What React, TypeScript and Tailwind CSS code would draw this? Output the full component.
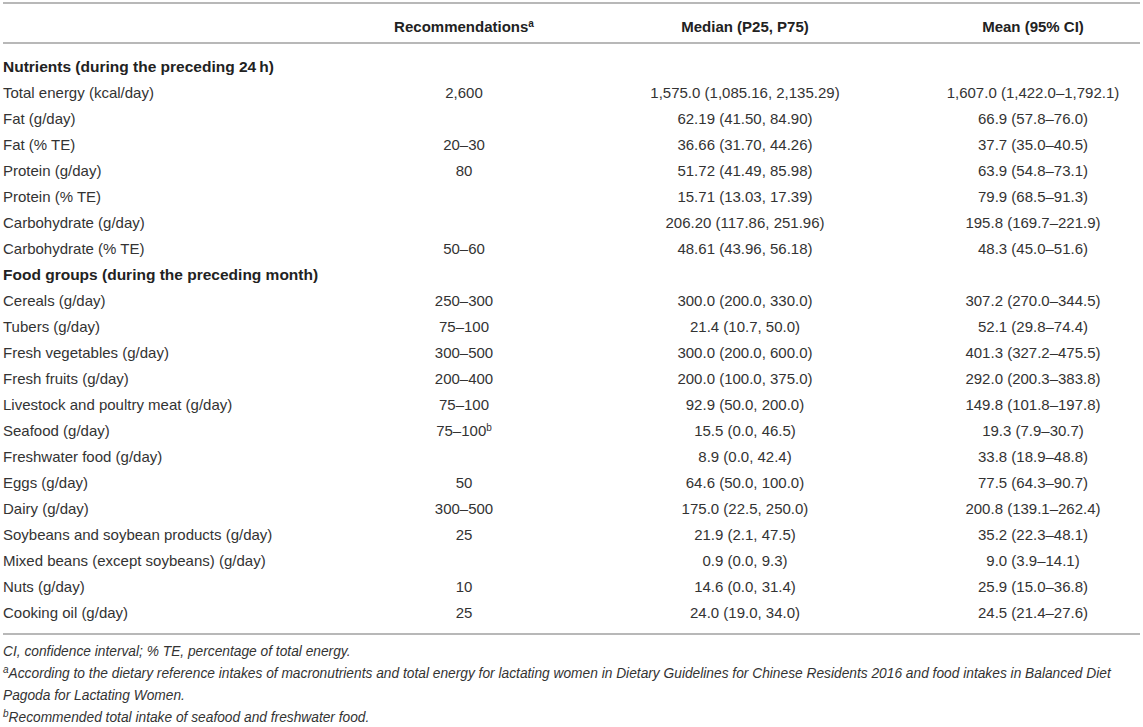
import React from 'react'

type Row = { label: string; rec?: string; sup?: string; median?: string; mean?: string; section?: boolean }

const rows: Row[] = [
  { label: 'Nutrients (during the preceding 24\u2009h)', section: true },
  { label: 'Total energy (kcal/day)', rec: '2,600', median: '1,575.0 (1,085.16, 2,135.29)', mean: '1,607.0 (1,422.0–1,792.1)' },
  { label: 'Fat (g/day)', median: '62.19 (41.50, 84.90)', mean: '66.9 (57.8–76.0)' },
  { label: 'Fat (% TE)', rec: '20–30', median: '36.66 (31.70, 44.26)', mean: '37.7 (35.0–40.5)' },
  { label: 'Protein (g/day)', rec: '80', median: '51.72 (41.49, 85.98)', mean: '63.9 (54.8–73.1)' },
  { label: 'Protein (% TE)', median: '15.71 (13.03, 17.39)', mean: '79.9 (68.5–91.3)' },
  { label: 'Carbohydrate (g/day)', median: '206.20 (117.86, 251.96)', mean: '195.8 (169.7–221.9)' },
  { label: 'Carbohydrate (% TE)', rec: '50–60', median: '48.61 (43.96, 56.18)', mean: '48.3 (45.0–51.6)' },
  { label: 'Food groups (during the preceding month)', section: true },
  { label: 'Cereals (g/day)', rec: '250–300', median: '300.0 (200.0, 330.0)', mean: '307.2 (270.0–344.5)' },
  { label: 'Tubers (g/day)', rec: '75–100', median: '21.4 (10.7, 50.0)', mean: '52.1 (29.8–74.4)' },
  { label: 'Fresh vegetables (g/day)', rec: '300–500', median: '300.0 (200.0, 600.0)', mean: '401.3 (327.2–475.5)' },
  { label: 'Fresh fruits (g/day)', rec: '200–400', median: '200.0 (100.0, 375.0)', mean: '292.0 (200.3–383.8)' },
  { label: 'Livestock and poultry meat (g/day)', rec: '75–100', median: '92.9 (50.0, 200.0)', mean: '149.8 (101.8–197.8)' },
  { label: 'Seafood (g/day)', rec: '75–100', sup: 'b', median: '15.5 (0.0, 46.5)', mean: '19.3 (7.9–30.7)' },
  { label: 'Freshwater food (g/day)', median: '8.9 (0.0, 42.4)', mean: '33.8 (18.9–48.8)' },
  { label: 'Eggs (g/day)', rec: '50', median: '64.6 (50.0, 100.0)', mean: '77.5 (64.3–90.7)' },
  { label: 'Dairy (g/day)', rec: '300–500', median: '175.0 (22.5, 250.0)', mean: '200.8 (139.1–262.4)' },
  { label: 'Soybeans and soybean products (g/day)', rec: '25', median: '21.9 (2.1, 47.5)', mean: '35.2 (22.3–48.1)' },
  { label: 'Mixed beans (except soybeans) (g/day)', median: '0.9 (0.0, 9.3)', mean: '9.0 (3.9–14.1)' },
  { label: 'Nuts (g/day)', rec: '10', median: '14.6 (0.0, 31.4)', mean: '25.9 (15.0–36.8)' },
  { label: 'Cooking oil (g/day)', rec: '25', median: '24.0 (19.0, 34.0)', mean: '24.5 (21.4–27.6)' },
]

export default function App() {
  return (
    <div className="w-[1143px] h-[727px] bg-white overflow-hidden pt-[2px] px-[3px] text-[#333] text-[15px] font-['Liberation_Sans',Arial,sans-serif]">
      <div className="w-[1137px]">
        {/* header */}
        <div className="grid grid-cols-[361px_200px_362px_214px] border-y-2 border-[#b8b8b8] pt-[14px] pb-[6px] leading-[18px] font-bold text-[#222]">
          <div />
          <div className="text-center">
            Recommendations<sup className="text-[10px]">a</sup>
          </div>
          <div className="text-center">Median (P25, P75)</div>
          <div className="text-center">Mean (95% CI)</div>
        </div>

        {/* body */}
        <div className="pt-[10px] pb-[7px] border-b-2 border-[#b8b8b8]">
          {rows.map((r) =>
            r.section ? (
              <div key={r.label} className="h-[26px] flex items-center font-bold text-[15.5px] text-[#222]">
                {r.label}
              </div>
            ) : (
              <div key={r.label} className="h-[26px] grid grid-cols-[361px_200px_362px_214px] items-center">
                <div>{r.label}</div>
                <div className="text-center">
                  {r.rec}
                  {r.sup && <sup className="text-[10px]">{r.sup}</sup>}
                </div>
                <div className="text-center">{r.median}</div>
                <div className="text-center">{r.mean}</div>
              </div>
            )
          )}
        </div>

        {/* notes */}
        <div className="pt-[6px] italic leading-[22px] text-[13.75px]">
          <p>CI, confidence interval; % TE, percentage of total energy.</p>
          <p>
            <span className="relative -top-[5px] text-[10px] leading-none">a</span>According to the dietary reference intakes of
            macronutrients and total energy for lactating women in Dietary Guidelines for Chinese Residents 2016 and food intakes in
            Balanced Diet Pagoda for Lactating Women.
          </p>
          <p>
            <span className="relative -top-[5px] text-[10px] leading-none">b</span>Recommended total intake of seafood and freshwater
            food.
          </p>
        </div>
      </div>
    </div>
  )
}
